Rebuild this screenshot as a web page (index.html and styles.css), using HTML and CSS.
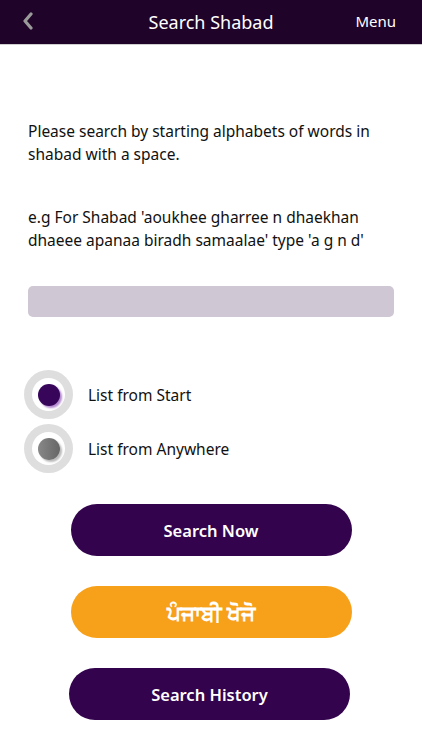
FILE: index.html
```html
<!DOCTYPE html>
<html>
<head>
<meta charset="utf-8">
<link rel="stylesheet" href="styles.css">
</head>
<body>
<header class="topbar">
  <span class="back"><svg width="12" height="18" viewBox="0 0 12 18"><path d="M9 2 L3 9 L9 16" fill="none" stroke="#9a9a9a" stroke-width="3.2" stroke-linecap="round" stroke-linejoin="round"/></svg></span>
  <span class="title">Search Shabad</span>
  <span class="menu">Menu</span>
</header>
<main class="content">
  <p class="info">Please search by starting alphabets of words in shabad with a space.</p>
  <p class="info example">e.g For Shabad 'aoukhee gharree n dhaekhan dhaeee apanaa biradh samaalae' type 'a g n d'</p>
  <div class="field"></div>
  <div class="options">
    <div class="option"><span class="radio"><span class="dot on"></span></span><span class="label">List from Start</span></div>
    <div class="option"><span class="radio"><span class="dot off"></span></span><span class="label">List from Anywhere</span></div>
  </div>
  <div class="buttons">
    <button class="btn purple">Search Now</button>
    <button class="btn orange">ਪੰਜਾਬੀ ਖੋਜੋ</button>
    <button class="btn purple hist">Search History</button>
  </div>
</main>
</body>
</html>
```
FILE: styles.css
```css
* { box-sizing: border-box; }
html, body { margin: 0; padding: 0; background: #fff; }
body { width: 422px; height: 750px; overflow: hidden; font-family: "Noto Sans", "Open Sans", sans-serif; color: #111; }
.topbar {
  height: 45px; background: #1f0329; border-bottom: 1px solid #cfcfcf;
  display: flex; align-items: center; position: relative; color: #fff;
}
.back { position: absolute; left: 22px; top: 12px; display: flex; }
.title { flex: 1; text-align: center; font-size: 18px; }
.menu { position: absolute; right: 26px; top: 11px; font-size: 15px; }
.content { padding: 0 28px; }
.info { margin: 0; font-size: 15.5px; line-height: 23px; }
.info:first-child { margin-top: 75px; }
.example { margin-top: 40px; }
.field { margin-top: 34px; height: 31px; background: #cfc7d3; border-radius: 5px; width: 366px; }
.options { margin-top: 53px; margin-left: -4px; display: flex; flex-direction: column; gap: 5px; }
.option { display: flex; align-items: center; }
.radio {
  width: 49px; height: 49px; border-radius: 50%;
  display: flex; align-items: center; justify-content: center;
  box-shadow: inset 0 0 0 8px #dedede; background: #fff;
}
.radio > .dot { width: 22px; height: 22px; border-radius: 50%; }
.dot.on { background: #37055a; box-shadow: 2px 2px 2px #b58ad0; }
.dot.off { background: linear-gradient(90deg, #888 0%, #666 100%); box-shadow: 2px 2px 2px #bbb; }
.label { margin-left: 15px; font-size: 15.5px; }
.buttons { margin-top: 31px; display: flex; flex-direction: column; align-items: center; gap: 30px; }
.btn {
  width: 281px; height: 52px; border: none; border-radius: 26px;
  font-family: "Noto Sans", "Open Sans", sans-serif; font-size: 16.5px; font-weight: 600; color: #fff;
}
.purple { background: #33034d; }
.orange { background: #f7a01a; font-size: 22px; }
.hist { margin-left: -3px; }
```
